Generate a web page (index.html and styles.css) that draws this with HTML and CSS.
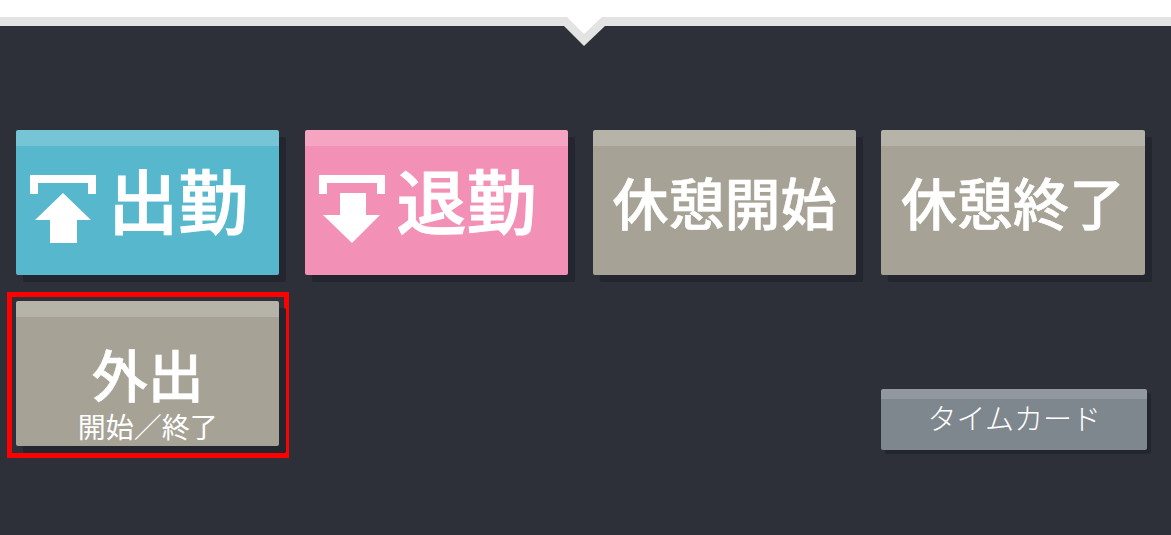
FILE: index.html
```html
<!DOCTYPE html>
<html lang="ja">

<head>
    <meta charset="UTF-8">
    <title>打刻</title>
    <link rel="stylesheet" href="styles.css">
</head>

<body>
    <header class="top-bar">
        <svg class="notch" width="42" height="30" viewBox="0 0 42 30">
            <polygon points="0,9 3,0 39,0 41,9 20,29" fill="#e3e3e3" />
            <polygon points="3,0 38,0 20,17" fill="#fff" />
        </svg>
    </header>
    <main class="stamp-grid">
        <div class="btn btn-icon-row btn-in">
            <svg class="btn-icon" width="66" height="68" viewBox="0 0 66 68">
                <path d="M0 19V0H66V19H58V8H8V19Z" fill="#fff" />
                <path d="M33 18L61 45H47V68H20V45H5Z" fill="#fff" />
            </svg>
            <span class="btn-label-big">出勤</span>
        </div>
        <div class="btn btn-icon-row btn-out">
            <svg class="btn-icon" width="66" height="68" viewBox="0 0 66 68">
                <path d="M0 19V0H66V19H58V8H8V19Z" fill="#fff" />
                <path d="M21 18H47V40H61L33 68L4 40H21Z" fill="#fff" />
            </svg>
            <span class="btn-label-big">退勤</span>
        </div>
        <div class="btn btn-gray"><span class="btn-label">休憩開始</span></div>
        <div class="btn btn-gray"><span class="btn-label">休憩終了</span></div>
        <div class="highlight">
            <div class="btn btn-gray btn-stack">
                <span class="btn-label">外出</span>
                <span class="btn-sub">開始／終了</span>
            </div>
        </div>
        <div class="btn btn-card">タイムカード</div>
    </main>
</body>

</html>
```

FILE: styles.css
```css
body {
    margin: 0;
    height: 535px;
    overflow: hidden;
    background: #2d3039;
    font-family: "Noto Sans CJK JP", sans-serif;
    color: #fff;
}

.top-bar {
    position: relative;
    height: 17px;
    background: #fff;
    border-bottom: 9px solid #e3e3e3;
}

.notch {
    position: absolute;
    left: 564px;
    top: 17px;
}

.stamp-grid {
    display: grid;
    grid-template-columns: repeat(4, 263.2px);
    grid-template-rows: 145px 145px;
    column-gap: 25.2px;
    row-gap: 26px;
    padding: 104px 0 0 16.2px;
}

.btn {
    display: flex;
    align-items: center;
    justify-content: center;
    border-radius: 2px;
    box-shadow: 7px 7px 0 #23252f;
    background-image: linear-gradient(rgba(255, 255, 255, 0.18) 16px, transparent 16px);
}

.btn-icon-row {
    justify-content: flex-start;
    padding-left: 14px;
}

.btn-in {
    background-color: #57b8cd;
}

.btn-out {
    background-color: #f390b5;
}

.btn-gray {
    background-color: #a6a296;
}

.btn-icon {
    flex: none;
    margin: 13px 12px 0 0;
}

.btn-label-big {
    font-size: 70px;
    font-weight: 500;
    -webkit-text-stroke: 1px #fff;
    line-height: 1;
    margin-top: -8px;
}

.btn-label {
    font-size: 56px;
    font-weight: 500;
    -webkit-text-stroke: 0.6px #fff;
    line-height: 1;
    margin-top: -4px;
}

.btn-stack {
    height: 100%;
    flex-direction: column;
    justify-content: flex-start;
}

.btn-stack .btn-label {
    margin-top: 44px;
}

.btn-sub {
    font-size: 28px;
    line-height: 1;
    margin-top: 11px;
}

.highlight {
    border: 5px solid #f00;
    padding: 4px 5px 7px 4px;
    margin: -9px -10px -12px -9px;
}

.btn-card {
    grid-column: 4;
    align-self: end;
    width: 266px;
    height: 61px;
    margin-bottom: -4px;
    background-color: #7f878e;
    background-image: linear-gradient(rgba(255, 255, 255, 0.14) 10px, transparent 10px);
    font-size: 29px;
    font-weight: 300;
    box-sizing: border-box;
    padding-bottom: 6px;
    box-shadow: 4px 4px 0 #23252f;
}
```
